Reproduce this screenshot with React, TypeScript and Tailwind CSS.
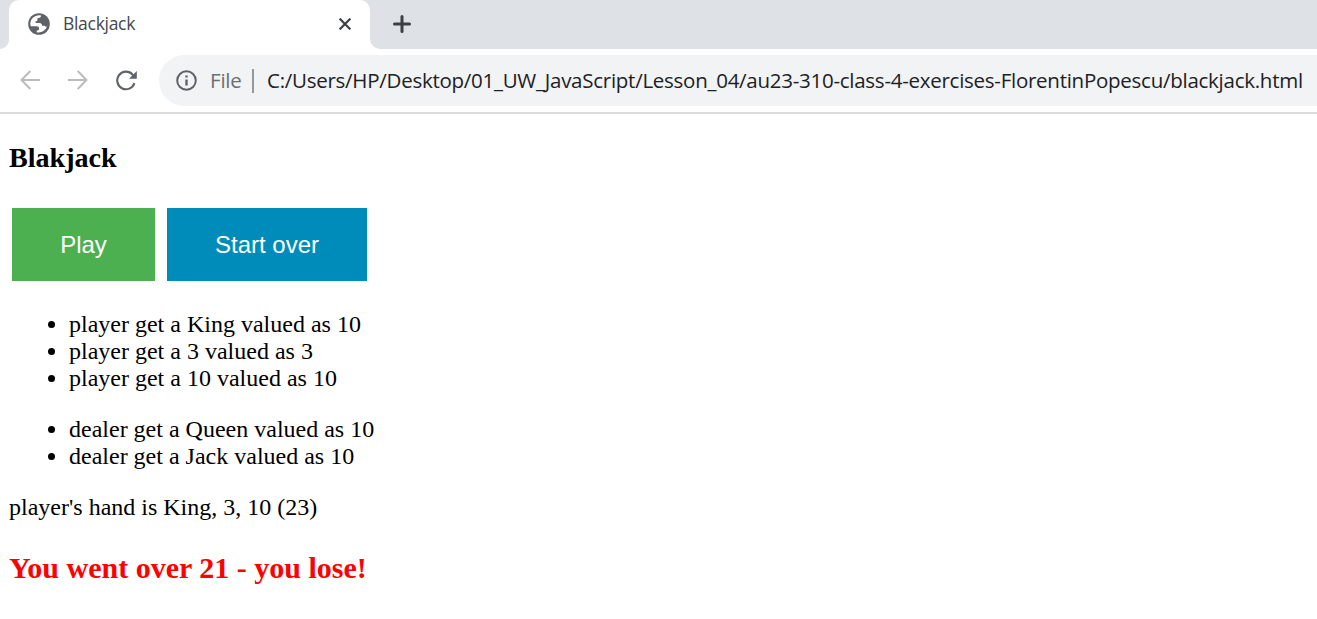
import React from "react";

const playerDraws = [
  "player get a King valued as 10",
  "player get a 3 valued as 3",
  "player get a 10 valued as 10",
];
const dealerDraws = [
  "dealer get a Queen valued as 10",
  "dealer get a Jack valued as 10",
];

function GlobeIcon() {
  return (
    <svg viewBox="0 0 22 22" className="block size-[22px] shrink-0">
      <circle cx="11" cy="11" r="10.8" fill="#5f6368" />
      <path
        d="M13.2 2.6c-.2 1.6-1.1 2.4-2.8 2.5-.9.1-1 .8-1 1.8 0 .9-.7 1.3-1.8 1.3v1.9h3.8c1.8 0 2.7 1 2.7 2.7h1.9c.9 0 1.4.4 1.9 1.1l1.2-.6A8.6 8.6 0 0 1 8.7 19.2v-1.7c1.7 0 2.4-.7 2.4-2.1 0-1.5-.8-2.2-2.4-2.2H2.7A8.6 8.6 0 0 1 13.2 2.6Z"
        fill="#fff"
      />
    </svg>
  );
}

function ArrowIcon({ forward = false }: { forward?: boolean }) {
  return (
    <svg
      viewBox="0 0 20 20"
      className={forward ? "block size-5 shrink-0 rotate-180" : "block size-5 shrink-0"}
      fill="none"
      stroke="#babcbe"
      strokeWidth="2"
    >
      <path d="M20 10H2M10.3 1 1.5 10l8.8 9" />
    </svg>
  );
}

function ReloadIcon() {
  return (
    <svg viewBox="0 0 21 21" className="block size-[21px] shrink-0">
      <path d="M18.4 13.2A8.8 8.8 0 1 1 16.6 4.6L18 6.2" fill="none" stroke="#5f6368" strokeWidth="2.1" />
      <path d="M20.8 1v7.8h-7.8Z" fill="#5f6368" />
    </svg>
  );
}

function InfoIcon() {
  return (
    <svg viewBox="0 0 21 21" className="block size-[21px] shrink-0" fill="none" stroke="#5f6368" strokeWidth="2">
      <circle cx="10.5" cy="10.5" r="9.3" />
      <path d="M10.5 9.5v6M10.5 5.4v2.2" strokeWidth="2.4" />
    </svg>
  );
}

function TabStrip() {
  return (
    <div className="flex h-[49px] bg-[#dee1e6]">
      <div className="flex w-[9px] bg-white">
        <div className="w-full rounded-br-[9px] bg-[#dee1e6]" />
      </div>
      <div className="flex w-[361px] items-center rounded-t-[10px] bg-white pr-[19px] pb-[2px] pl-[19px]">
        <GlobeIcon />
        <span className="ml-[13px] font-['Open_Sans',sans-serif] text-[17.5px] tracking-[-0.3px] text-[#45484c]">Blackjack</span>
        <svg viewBox="0 0 12 12" className="ml-auto size-3" fill="none" stroke="#3c4043" strokeWidth="2.2">
          <path d="m.6.6 10.8 10.8M11.4.6.6 11.4" />
        </svg>
      </div>
      <div className="flex grow bg-white">
        <div className="flex w-full items-center rounded-bl-[10px] bg-[#dee1e6] pb-[2px] pl-[23px]">
          <svg viewBox="0 0 18 18" className="size-[18px]" fill="none" stroke="#3c4043" strokeWidth="3" strokeLinecap="round">
            <path d="M9 1.5v15M1.5 9h15" />
          </svg>
        </div>
      </div>
    </div>
  );
}

function Toolbar() {
  return (
    <div className="flex h-[65px] items-start border-b-2 border-[#dadbdc] bg-white pt-[6px]">
      <div className="flex h-[51px] w-[159px] shrink-0 items-center pb-px pl-5">
        <ArrowIcon />
        <div className="ml-7">
          <ArrowIcon forward />
        </div>
        <div className="ml-7">
          <ReloadIcon />
        </div>
      </div>
      <div className="flex h-[51px] grow items-center overflow-hidden rounded-l-full bg-[#f1f3f4] pl-[17px] font-['Open_Sans',sans-serif] text-[20.5px] whitespace-nowrap">
        <InfoIcon />
        <span className="ml-[13px] w-[42px] tracking-[-0.2px] text-[#6b6e73]">File</span>
        <span className="h-[24px] w-[2px] shrink-0 bg-[#96989b]" />
        <span className="ml-[13px] tracking-[-0.262px] text-[#202124]">
          C:/Users/HP/Desktop/01_UW_JavaScript/Lesson_04/au23-310-class-4-exercises-FlorentinPopescu/blackjack.html
        </span>
      </div>
    </div>
  );
}

function DrawList({ items }: { items: string[] }) {
  return (
    <ul className="mb-6 list-disc pl-[60px]">
      {items.map((item) => (
        <li key={item}>{item}</li>
      ))}
    </ul>
  );
}

export default function App() {
  return (
    <div className="h-[619px] overflow-hidden bg-white">
      <TabStrip />
      <Toolbar />
      <main className="px-[9px] pt-[28px] font-['Liberation_Serif',serif] text-[24px] leading-[27px] text-black">
        <h3 className="text-[28.08px] leading-8 font-bold">Blakjack</h3>
        <div className="mt-[34px] mb-[30px] flex gap-3 pl-[3px] font-['Liberation_Sans',sans-serif] text-white">
          <button className="h-[73px] w-[143px] bg-[#4caf50]">Play</button>
          <button className="h-[73px] w-[200px] bg-[#008cba]">Start over</button>
        </div>
        <DrawList items={playerDraws} />
        <DrawList items={dealerDraws} />
        <p>player's hand is King, 3, 10 (23)</p>
        <h3 className="mt-[31px] text-[30px] leading-8 font-bold text-[#ff0000]">You went over 21 - you lose!</h3>
      </main>
    </div>
  );
}
